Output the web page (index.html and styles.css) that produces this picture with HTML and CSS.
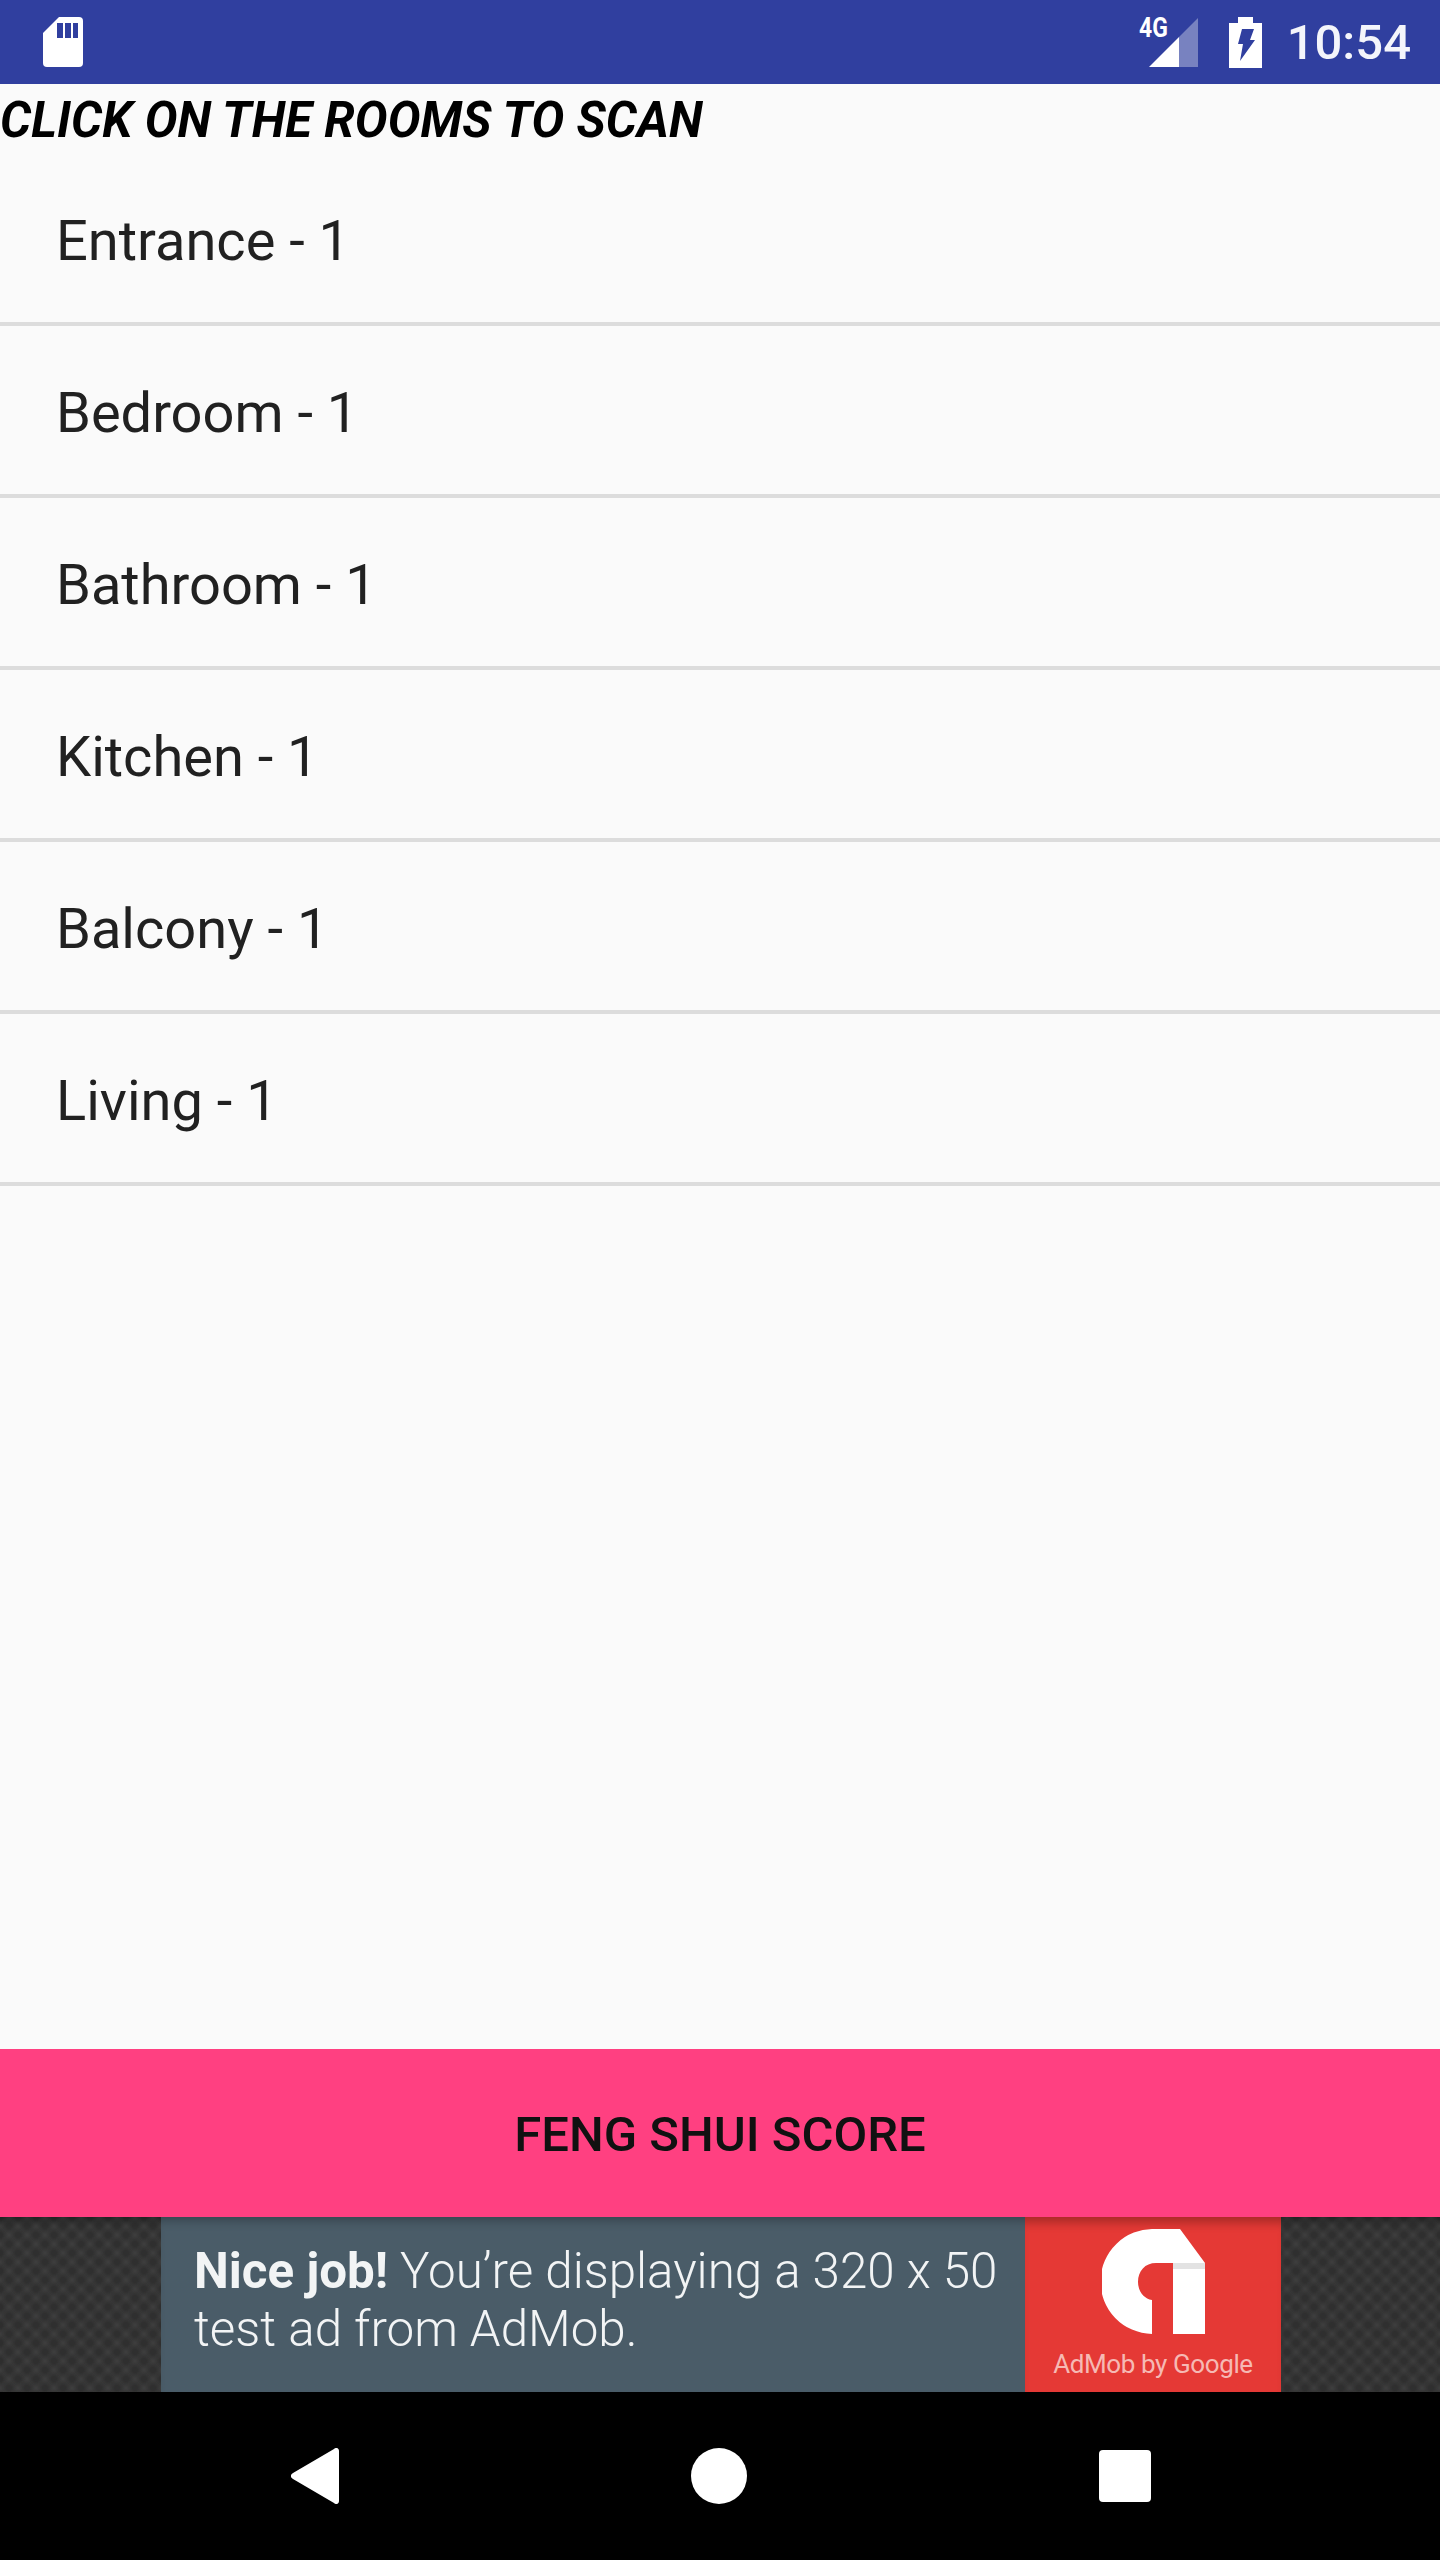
FILE: index.html
```html
<!DOCTYPE html>
<html lang="en">
<head>
    <meta charset="UTF-8">
    <meta name="viewport" content="width=device-width, initial-scale=1.0">
    <title>Feng Shui Rooms</title>
    <link rel="stylesheet" href="styles.css">
</head>
<body>

    <!-- Status Bar -->
    <header class="status-bar">
        <svg class="sd-icon" viewBox="0 0 40 50">
            <path fill="#fff" d="M4 50a4 4 0 0 1-4-4V16L16 0h20a4 4 0 0 1 4 4v42a4 4 0 0 1-4 4z"/>
            <path fill="#303f9f" d="M15 6h6v15h-6zM23 6h6v15h-6zM31 6h5v15h-5z" transform="translate(-1)"/>
        </svg>
        <div class="status-right">
            <div class="signal">
                <span class="network">4G</span>
                <svg class="signal-icon" viewBox="0 0 49 49">
                    <path fill="#fff" fill-opacity="0.35" d="M49 0v49H30V19z"/>
                    <path fill="#fff" d="M30 19v30H0z"/>
                </svg>
            </div>
            <svg class="battery-icon" viewBox="0 0 33 51">
                <path fill="#fff" d="M9 0h15v6h9v45H0V6h9z"/>
                <path fill="#303f9f" d="M13 12h12l-4 11h5L11 44l3-17H9z"/>
            </svg>
            <span class="clock">10:54</span>
        </div>
    </header>

    <!-- Main Content -->
    <main class="content">
        <h1 class="page-title">CLICK ON THE ROOMS TO SCAN</h1>
        <ul class="room-list">
            <li>Entrance - 1</li>
            <li>Bedroom - 1</li>
            <li>Bathroom - 1</li>
            <li>Kitchen - 1</li>
            <li>Balcony - 1</li>
            <li>Living - 1</li>
        </ul>
    </main>

    <button class="score-button">FENG SHUI SCORE</button>

    <!-- Test Ad -->
    <section class="ad-strip">
        <div class="ad-banner">
            <p class="ad-text"><b>Nice job!</b> You’re displaying a 320 x 50 test ad from AdMob.</p>
            <div class="ad-logo">
                <svg class="admob-icon" viewBox="0 0 103 105">
                    <path fill="#fff" d="M50 105A52.500 52.500 0 0 1 52 0h26l25 34v71H71V34H54c-11 0-18 8-18 19 0 9 6 17 14 18z"/>
                    <path fill="#e3e3e3" d="M71 34h32v6H71z"/>
                </svg>
                <span class="ad-brand">AdMob by Google</span>
            </div>
        </div>
    </section>

    <!-- Navigation Bar -->
    <nav class="nav-bar">
        <svg class="nav-back" viewBox="0 0 48 56">
            <path fill="#fff" d="M48 3v50c0 3-3 4-5 2L2 31c-3-2-3-4 0-6L43 1c2-2 5-1 5 2z"/>
        </svg>
        <div class="nav-home"></div>
        <div class="nav-recent"></div>
    </nav>

</body>
</html>
```

FILE: styles.css
```css
body {
    font-family: Roboto, sans-serif;
    background-color: #fafafa;
    color: #212121;
    margin: 0;
    height: 2560px;
    display: flex;
    flex-direction: column;
}

.status-bar {
    height: 84px;
    flex-shrink: 0;
    background-color: #303f9f;
    display: flex;
    align-items: center;
    justify-content: space-between;
    padding: 0 29px 0 43px;
}

.sd-icon {
    width: 40px;
    height: 50px;
}

.status-right {
    display: flex;
    align-items: center;
}

.signal {
    position: relative;
    width: 49px;
    height: 49px;
    margin-right: 31px;
}

.signal-icon {
    display: block;
    width: 49px;
    height: 49px;
}

.network {
    position: absolute;
    top: -3px;
    left: -10px;
    font-size: 27px;
    font-weight: 700;
    line-height: 27px;
    color: white;
    transform: scaleX(0.85);
    transform-origin: left;
}

.battery-icon {
    width: 33px;
    height: 51px;
    margin-right: 25px;
}

.clock {
    font-size: 49px;
    font-weight: 500;
    color: #f4f5fb;
}

.content {
    flex: 1;
}

.page-title {
    margin: 0;
    height: 70px;
    font-size: 49px;
    font-weight: 700;
    font-style: italic;
    line-height: 73px;
    letter-spacing: 0.1px;
    color: black;
    white-space: nowrap;
}

.room-list {
    list-style: none;
    margin: 0;
    padding: 0;
}

.room-list li {
    height: 168px;
    line-height: 174px;
    padding-left: 56px;
    font-size: 56px;
    border-bottom: 4px solid #dcdcdc;
}

.score-button {
    height: 168px;
    flex-shrink: 0;
    width: 100%;
    border: none;
    padding: 3px 0 0;
    background-color: #ff4081;
    color: #111;
    font-family: Roboto, sans-serif;
    font-size: 49px;
    font-weight: 500;
}

.ad-strip {
    height: 175px;
    flex-shrink: 0;
    display: flex;
    justify-content: center;
    background-color: #3d3d3d;
    background-image:
        radial-gradient(circle, #2f2f2f 20%, transparent 65%),
        radial-gradient(circle, #2f2f2f 20%, transparent 65%);
    background-size: 18px 18px;
    background-position: 0 0, 9px 9px;
    box-shadow: inset 0 10px 8px -6px rgba(0, 0, 0, 0.3);
}

.ad-banner {
    width: 1120px;
    margin-left: 2px;
    display: flex;
    background-color: #4a5c68;
    box-shadow: inset 0 10px 10px -6px rgba(0, 0, 0, 0.25);
}

.ad-text {
    flex: 1;
    margin: 0;
    padding: 25px 5px 0 33px;
    font-size: 49.300px;
    font-weight: 300;
    line-height: 58px;
    color: #f2f4f5;
}

.ad-text b {
    font-weight: 700;
}

.ad-logo {
    width: 256px;
    flex-shrink: 0;
    display: flex;
    flex-direction: column;
    align-items: center;
    padding-top: 12px;
    box-sizing: border-box;
    background-color: #e53935;
    box-shadow: inset 0 12px 10px -6px rgba(0, 0, 0, 0.25);
}

.admob-icon {
    width: 103px;
    height: 105px;
}

.ad-brand {
    margin-top: 15px;
    font-size: 26px;
    letter-spacing: -0.4px;
    color: #f6b9b4;
    white-space: nowrap;
}

.nav-bar {
    height: 168px;
    flex-shrink: 0;
    background-color: black;
    display: flex;
    align-items: center;
    justify-content: space-between;
    padding: 0 289px 0 291px;
}

.nav-back {
    width: 48px;
    height: 56px;
}

.nav-home {
    width: 56px;
    height: 56px;
    border-radius: 50%;
    background-color: white;
}

.nav-recent {
    width: 52px;
    height: 52px;
    border-radius: 4px;
    background-color: white;
}
```
